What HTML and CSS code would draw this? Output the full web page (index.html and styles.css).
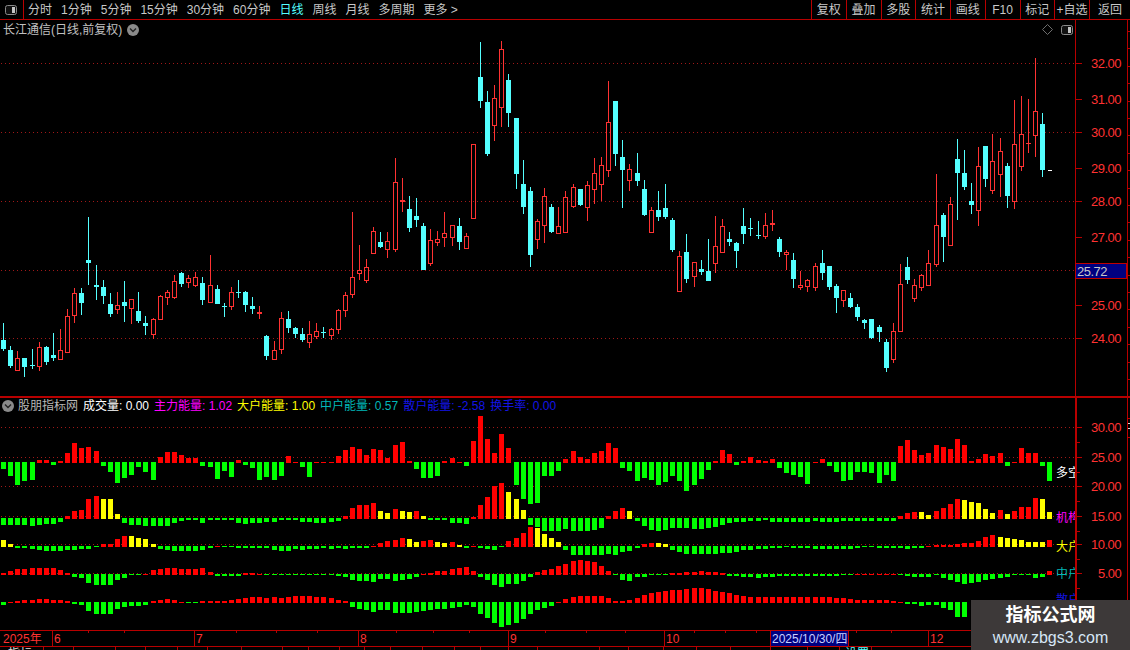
FILE: index.html
```html
<!DOCTYPE html>
<html lang="zh-CN">
<head>
<meta charset="utf-8">
<title>长江通信 日线</title>
<link rel="stylesheet" href="styles.css">
</head>
<body>
<div class="app">
  <header class="toolbar">
    <div class="layout-btn">
      <svg class="icon-layout" viewBox="0 0 12 10"><rect x="0.5" y="0.5" width="11" height="9" rx="2" fill="#111" stroke="#8a8a8a"/><rect x="7" y="2" width="3" height="6" fill="#c4c4c4"/></svg>
    </div>
    <nav class="periods">
      <span>分时</span><span>1分钟</span><span>5分钟</span><span>15分钟</span><span>30分钟</span><span>60分钟</span><span class="active">日线</span><span>周线</span><span>月线</span><span>多周期</span><span>更多 &gt;</span>
    </nav>
    <nav class="actions">
      <span>复权</span><span>叠加</span><span>多股</span><span>统计</span><span>画线</span><span>F10</span><span>标记</span><span>+自选</span><span class="back">返回</span>
    </nav>
  </header>

  <section class="panel panel-price">
    <svg class="plot" id="price-plot" viewBox="0 20 1075 376"></svg>
    <svg class="axis" id="price-axis" viewBox="1075 20 55 376"></svg>
    <div class="title">
      <span>长江通信(日线,前复权)</span>
      <svg class="icon-chevron" viewBox="0 0 12 12"><circle cx="6" cy="6" r="6" fill="#8a8a8a"/><path d="M3 4.6 6 7.6 9 4.6" fill="none" stroke="#222" stroke-width="1.4"/></svg>
    </div>
    <div class="corner">
      <svg class="icon-diamond" viewBox="0 0 11 11"><path d="M5.5 0.5 10.5 5.5 5.5 10.5 0.5 5.5Z" fill="none" stroke="#6e6e6e"/></svg>
      <svg class="icon-layout" viewBox="0 0 12 10"><rect x="0.5" y="0.5" width="11" height="9" rx="2" fill="#111" stroke="#8a8a8a"/><rect x="7" y="2" width="3" height="6" fill="#c4c4c4"/></svg>
    </div>
  </section>

  <section class="panel panel-indicator">
    <svg class="plot" id="ind-plot" viewBox="0 398 1075 232"></svg>
    <svg class="axis" id="ind-axis" viewBox="1075 398 55 232"></svg>
    <div class="legend">
      <svg class="icon-chevron" viewBox="0 0 12 12"><circle cx="6" cy="6" r="6" fill="#8a8a8a"/><path d="M3 4.6 6 7.6 9 4.6" fill="none" stroke="#222" stroke-width="1.4"/></svg>
      <span class="name">股朋指标网</span>
      <span class="c-white">成交量: 0.00</span>
      <span class="c-magenta">主力能量: 1.02</span>
      <span class="c-yellow">大户能量: 1.00</span>
      <span class="c-teal">中户能量: 0.57</span>
      <span class="c-blue">散户能量: -2.58</span>
      <span class="c-blue">换手率: 0.00</span>
    </div>
  </section>

  <svg class="xaxis" id="xaxis" viewBox="0 630 1130 20"></svg>

  <aside class="watermark">
    <strong>指标公式网</strong>
    <span>www.zbgs3.com</span>
  </aside>
</div>
<script src="script.js"></script>
</body>
</html>
```

FILE: styles.css
```css
* { box-sizing: border-box; }
html, body { margin: 0; padding: 0; background: #000; }
body { font: 12px/1 "Liberation Sans", "Noto Sans CJK SC", sans-serif; color: #c8c8c8; overflow: hidden; }

.app { position: relative; width: 1130px; height: 650px; display: flex; flex-direction: column; overflow: hidden; background: #000; }

.toolbar { display: flex; align-items: center; height: 20px; flex: none; border-bottom: 1px solid #b80000; }
.layout-btn { width: 24px; height: 19px; display: flex; align-items: center; justify-content: center; border-right: 1px solid #b80000; padding-right: 1px; }
.icon-layout { width: 12px; height: 10px; display: block; }
.periods { display: flex; gap: 9px; margin-left: 4px; }
.periods .active { color: #54ffff; }
.actions { display: flex; margin-left: auto; height: 19px; }
.actions span { width: 34.75px; display: flex; align-items: center; justify-content: center; border-left: 1px solid #b80000; }
.actions .back { width: 41px; }

.panel { position: relative; display: flex; flex: none; }
.panel-price { height: 376px; border-bottom: 0; }
.panel-indicator { height: 234px; border-top: 2px solid #b80000; }
.plot { display: block; width: 1075px; height: 100%; flex: none; }
.axis { display: block; width: 55px; height: 100%; flex: none; }

.title { position: absolute; left: 3px; top: 3px; display: flex; align-items: center; gap: 5px; height: 14px; color: #c0c0c0; }
.icon-chevron { width: 12px; height: 12px; display: block; flex: none; }
.corner { position: absolute; left: 1042px; top: 4px; display: flex; align-items: center; gap: 8px; }
.icon-diamond { width: 11px; height: 11px; display: block; }

.legend { position: absolute; left: 2px; top: 1px; display: flex; align-items: center; gap: 5px; height: 13px; white-space: nowrap; }
.legend .name { color: #b8b8b8; margin-left: -1px; }
.c-white { color: #fff; }
.c-magenta { color: #ff00ff; }
.c-yellow { color: #ffff00; }
.c-teal { color: #00b8b8; }
.c-blue { color: #1414e6; }

.xaxis { display: block; width: 1130px; height: 20px; flex: none; }

.watermark { position: absolute; left: 971px; top: 600px; width: 159px; height: 50px; background: #3d3939; display: flex; flex-direction: column; align-items: center; padding-top: 6px; gap: 6px; }
.watermark strong { font-size: 18px; line-height: 18px; color: #fff; font-weight: 700; }
.watermark span { font-size: 16px; line-height: 16px; color: #d6e6f6; }

svg text { font-family: "Liberation Sans", "Noto Sans CJK SC", sans-serif; }
.price-label { font-size: 13px; letter-spacing: -0.5px; fill: #ff3232; }
.last-label { font-size: 13px; letter-spacing: -0.5px; fill: #c8c8c8; }
.side-label { font-size: 12px; }
.x-label { font-size: 12px; fill: #ff3232; }
.x-date { font-size: 12px; fill: #c8d0ff; }
.tab-label { font-size: 12px; }
```

FILE: script.js
```js
var NS = 'http://www.w3.org/2000/svg';
var RED = '#ff3232', CYAN = '#54ffff', LINE = '#b80000', DOT = '#a01818';

function el(parent, name, attrs, text) {
  var n = document.createElementNS(NS, name);
  for (var k in attrs) n.setAttribute(k, attrs[k]);
  if (text !== undefined) n.textContent = text;
  parent.appendChild(n);
  return n;
}
function rect(p, x, y, w, h, fill) { return el(p, 'rect', { x: x, y: y, width: w, height: h, fill: fill, 'shape-rendering': 'crispEdges' }); }
function dotted(p, y, x2) {
  el(p, 'line', { x1: 1, x2: x2, y1: y + 0.5, y2: y + 0.5, stroke: DOT, 'stroke-width': 1, 'stroke-dasharray': '1 3', 'shape-rendering': 'crispEdges' });
}
function px(i) { return Math.floor(3.58 + 7.118 * i); }

/* colour, high, body top, body bottom, low — one entry per trading day */
var candles = [
'c 323 340 349 351','c 346 350 366 368','r 351 358 371 371','c 358 358 367 377','c 349 365 366 369',
'r 342 347 367 371','c 346 347 362 365','c 333 355 358 361','r 329 350 360 360','r 309 316 353 353',
'r 288 293 316 323','c 288 293 303 315','c 217 260 263 285','c 265 285 287 300','c 280 287 296 304',
'c 293 304 314 317','r 292 305 310 314','c 281 302 306 322','r 299 299 309 324','c 292 311 321 323',
'c 316 323 326 335','r 318 319 335 339','r 295 296 320 320','r 290 292 298 305','r 275 281 298 299',
'c 272 273 284 287','r 275 278 283 288','r 272 277 286 287','c 277 283 300 305','r 255 285 303 303',
'c 285 289 304 304','c 303 306 307 317','r 287 292 307 310','c 280 292 293 298','c 291 292 305 312',
'c 297 306 309 314','r 306 312 314 319','c 335 336 356 360','r 341 350 360 360','r 312 318 350 354',
'c 311 319 328 333','c 327 328 334 338','c 328 334 340 342','r 321 334 343 348','r 323 331 337 339',
'c 327 332 333 338','r 328 329 336 340','r 309 310 330 334','r 292 295 311 317','r 212 277 295 298',
'r 245 270 274 280','r 259 267 281 283','r 227 231 254 254','c 232 242 247 248','r 232 241 250 258',
'r 158 182 250 252','r 178 200 202 212','c 196 209 228 232','c 198 216 220 227','c 223 226 270 270',
'r 229 240 264 266','r 231 239 243 246','r 212 233 238 247','r 225 225 238 246','c 218 226 242 250',
'r 233 236 249 249','r 144 144 219 219','c 42 77 101 108','c 91 102 154 156','r 85 98 126 141',
'r 41 49 108 127','c 74 80 113 127','c 118 118 174 189','c 160 184 207 214','c 187 191 255 267',
'r 219 221 240 249','r 188 196 226 243','c 204 207 232 233','r 207 226 234 234','r 191 197 233 233',
'r 184 187 207 208','c 189 189 205 206','r 181 185 208 221','r 158 173 190 204','r 157 165 185 201',
'r 81 122 171 177','c 101 101 154 166','c 140 157 170 208','r 164 169 181 191','c 153 173 181 186',
'c 180 189 215 216','r 207 210 233 233','c 191 210 217 221','c 184 208 217 219','c 218 220 250 252',
'r 251 256 292 292','c 234 252 279 283','r 262 262 277 287','c 260 269 272 275','c 239 271 281 281',
'r 216 246 264 273','r 219 226 253 253','c 232 239 242 246','c 242 243 251 268','c 208 226 234 244',
'c 218 228 229 236','c 221 235 236 239','r 213 225 237 239','r 210 223 225 231','c 237 239 252 257',
'r 250 252 255 270','c 253 260 279 288','r 271 285 288 290','r 279 280 287 292','r 263 266 288 291',
'c 250 263 273 280','c 266 266 287 290','c 284 286 298 313','r 290 290 301 307','c 293 298 307 308',
'c 304 307 317 321','c 319 320 323 329','c 319 319 338 339','c 325 327 332 342','c 339 342 368 372',
'r 323 331 360 363','r 264 284 332 332','c 257 267 280 284','r 279 285 299 302','r 274 275 288 291',
'r 250 263 286 286','r 174 225 265 267','c 213 215 237 262','r 197 204 246 246','c 139 159 173 220',
'c 150 173 187 190','c 183 201 205 214','r 147 166 211 226','c 146 146 179 187','r 134 161 191 194',
'r 138 151 175 197','c 163 166 196 208','r 100 144 202 209','r 96 134 167 171','r 99 143 144 153',
'r 58 111 136 157','c 113 124 170 177'
];

/* signed heights: + red, - green, yN yellow */
var rows = [
{ base: 462, data: '-7 -14 -23 -19 -18 3 3 -3 2 10 20 15 16 12 -4 -10 -21 -16 -13 -5 -10 -18 6 11 11 8 5 5 -4 -5 -17 -9 -15 3 -3 -6 -18 -15 -18 -14 7 1 -5 -15 1 1 1 7 13 16 14 8 14 13 5 18 21 2 -7 -16 -16 -14 2 5 1 -4 22 47 24 10 29 15 -23 -37 -42 -41 -14 -14 -9 4 12 6 4 10 12 20 15 -6 -9 -19 -16 -18 -23 -20 -14 -19 -29 -23 -17 -8 2 13 9 -3 2 6 3 2 4 -6 -11 -13 -15 -22 1 4 -4 -10 -19 -18 -10 -10 -11 -21 -13 -19 17 23 13 8 10 18 16 14 24 18 2 4 9 7 10 -4 1 15 10 10 -4 -19' },
{ base: 518, data: '-7 -7 -7 -7 -8 -7 -6 -6 -4 3 8 9 20 23 y20 y20 y5 -5 -7 -7 -8 -8 -8 -8 -5 -3 -2 -2 -5 -2 -2 -2 -2 -5 -6 -5 -5 -4 -4 -2 -2 -2 -4 -4 -5 -5 -4 -3 3 11 14 14 16 y8 y6 10 y8 y7 8 y3 -2 -2 -2 -5 -5 -6 2 14 22 33 36 y27 y20 y9 -7 -9 -13 -13 -13 -11 -13 -13 -13 -12 -10 3 8 11 y8 -3 -8 -12 -13 -12 -10 -10 -10 -11 -11 -10 -9 -7 -5 -4 -4 -3 -3 -2 -4 -4 -4 -4 -4 -4 -3 -4 -4 -4 -3 -3 -3 -3 -3 -3 -3 -3 3 6 7 y7 y4 8 11 15 20 y19 y17 y16 y10 y6 9 y5 8 12 12 21 y20 y7' },
{ base: 546, data: 'y7 y3 -2 -2 -3 -4 -5 -5 -5 -4 -4 -3 -3 -1 3 3 8 11 y11 y9 y8 y3 -3 -4 -5 -5 -5 -5 -4 -2 1 -1 -1 -2 -2 -2 -2 -2 -4 -5 -5 -3 -4 -3 -3 -2 -3 -2 -3 -2 -2 -2 1 4 6 7 9 y8 y5 6 7 y5 y4 5 y2 -2 1 -2 -3 -4 -1 6 9 14 20 y19 y13 y9 y5 -4 -9 -9 -9 -9 -9 -8 -9 -6 -5 -2 3 4 y4 y3 -4 -6 -8 -8 -8 -8 -8 -7 -7 -6 -4 -4 -3 -3 -2 -2 -1 -2 -2 -2 -3 -3 -3 -3 -3 -3 -2 -1 -1 -2 -2 -2 -2 -3 -2 -2 1 2 2 2 3 4 4 6 10 12 y10 y9 y8 y7 y5 y5 y5 7' },
{ base: 574, data: '2 4 6 6 7 7 7 7 5 2 -3 -4 -9 -11 -11 -11 -6 -4 -1 -1 1 5 6 7 7 6 6 6 7 3 -2 -2 -2 -2 2 2 1 -1 -1 -1 -1 -1 -1 -1 -1 -1 -1 -2 -3 -6 -7 -7 -8 -5 -5 -7 -6 -5 -3 1 2 4 4 6 7 8 4 -3 -6 -11 -13 -10 -10 -7 -3 3 5 6 9 11 14 15 14 13 9 4 -1 -6 -7 -3 -3 -1 -1 -1 2 2 3 3 4 3 3 2 -2 -2 -3 -3 -4 -3 -3 -2 -2 -2 -2 -2 -2 -2 -2 -2 -1 -1 1 1 1 1 1 1 -1 -2 -3 -3 -3 -1 -4 -6 -8 -10 -9 -8 -6 -5 -4 -3 -1 -1 -1 -4 -3 4' },
{ base: 602, data: '-3 1 2 3 3 4 4 3 3 2 -2 -3 -9 -12 -12 -12 -7 -5 -4 -4 -3 2 3 4 3 1 -1 -1 2 2 2 2 3 4 5 6 6 5 6 5 6 7 7 7 6 6 5 3 2 -5 -7 -8 -10 -8 -8 -11 -11 -11 -10 -9 -8 -7 -7 -6 -5 -3 -5 -12 -16 -21 -25 -23 -21 -17 -12 -8 -6 -4 1 4 6 7 7 7 7 5 2 2 3 5 8 10 11 12 13 13 14 15 15 14 12 11 10 8 7 6 6 6 6 6 6 6 6 6 6 6 6 5 5 4 3 3 3 3 3 2 1 -2 -2 -4 -3 -3 -6 -8 -15 -15' }
];

function drawPrice() {
  var plot = document.getElementById('price-plot');
  [63, 132, 201, 270, 338].forEach(function (y) { dotted(plot, y, 1075); });
  candles.forEach(function (s, i) {
    var p = s.split(' '), c = px(i), h = +p[1], t = +p[2], b = +p[3], l = +p[4];
    var col = p[0] === 'c' ? CYAN : RED;
    if (h < t) rect(plot, c, h, 1, t - h, col);
    if (l > b) rect(plot, c, b, 1, l - b, col);
    if (p[0] === 'c' || b - t <= 2) {
      rect(plot, c - 2, t, 5, Math.max(b - t, 1), col);
    } else {
      rect(plot, c - 2, t, 5, 1, col);
      rect(plot, c - 2, b - 1, 5, 1, col);
      rect(plot, c - 2, t, 1, b - t, col);
      rect(plot, c + 2, t, 1, b - t, col);
    }
  });
  rect(plot, 1048, 170, 4, 1, '#fff');

  var ax = document.getElementById('price-axis');
  rect(ax, 1075, 20, 1, 376, LINE);
  rect(ax, 1127, 20, 1, 376, LINE);
  var labels = { '32.00': 63, '31.00': 99, '30.00': 132, '29.00': 168, '28.00': 201, '27.00': 237, '25.00': 305, '24.00': 338 };
  Object.keys(labels).forEach(function (t) {
    var y = labels[t];
    rect(ax, 1076, y, 6, 1, LINE);
    el(ax, 'text', { x: 1091, y: y + 5, 'class': 'price-label' }, t);
  });
  rect(ax, 1076, 270, 6, 1, LINE);
  for (var y = 31; y < 396; y += 17.4) rect(ax, 1128, Math.round(y), 2, 1, LINE);
  el(ax, 'rect', { x: 1075.5, y: 263.5, width: 51, height: 15, fill: '#000080', stroke: '#c00000', 'shape-rendering': 'crispEdges' });
  el(ax, 'text', { x: 1077, y: 276, 'class': 'last-label' }, '25.72');
}

function drawIndicator() {
  var plot = document.getElementById('ind-plot');
  [427, 457, 486, 516, 544, 573].forEach(function (y) { dotted(plot, y, 1075); });
  rows.forEach(function (row) {
    row.data.split(' ').forEach(function (v, i) {
      var x = px(i) - 2, yellow = v.charAt(0) === 'y', n = yellow ? +v.slice(1) : +v;
      if (n < 0) rect(plot, x, row.base, 5, -n, '#00ff00');
      else rect(plot, x, row.base + 1 - n, 5, n, yellow ? '#ffff00' : '#ff0000');
    });
  });
  [['多空', 477, '#ffffff'], ['机构', 522, '#ff00ff'], ['大户', 551, '#ffff00'], ['中户', 578, '#00b8b8'], ['散户', 604, '#1414e6']].forEach(function (l) {
    el(plot, 'text', { x: 1056, y: l[1], fill: l[2], 'class': 'side-label' }, l[0]);
  });

  var ax = document.getElementById('ind-axis');
  rect(ax, 1075, 398, 2, 232, LINE);
  rect(ax, 1127, 398, 1, 232, LINE);
  var labels = { '30.00': 427, '25.00': 457, '20.00': 486, '15.00': 516, '10.00': 544, '5.00': 573 };
  Object.keys(labels).forEach(function (t) {
    var y = labels[t];
    rect(ax, 1077, y, 5, 1, LINE);
    rect(ax, 1077, y + 15, 3, 1, LINE);
    el(ax, 'text', { x: t.length > 4 ? 1091 : 1098, y: y + 5, 'class': 'price-label' }, t);
  });
  el(ax, 'rect', { x: 1127.5, y: 418.5, width: 4, height: 19, fill: 'none', stroke: '#c00000', 'shape-rendering': 'crispEdges' });
  rect(ax, 1128, 423, 2, 1, '#ddd');
  rect(ax, 1128, 428, 2, 1, '#ddd');
}

function drawXAxis() {
  var s = document.getElementById('xaxis');
  rect(s, 0, 630, 1130, 1, LINE);
  rect(s, 0, 646, 1130, 1, LINE);
  el(s, 'text', { x: 3, y: 643, 'class': 'x-label' }, '2025年');
  [[52, '6'], [194, '7'], [358, '8'], [508, '9'], [664, '10'], [928, '12']].forEach(function (m) {
    rect(s, m[0], 631, 1, 15, LINE);
    el(s, 'text', { x: m[0] + 2, y: 643, 'class': 'x-label' }, m[1]);
  });
  [88, 124, 236, 276, 317, 396, 433, 469, 545, 586, 625, 694, 725, 756, 856, 891].forEach(function (x) { rect(s, x, 631, 1, 2, LINE); });
  el(s, 'rect', { x: 770.5, y: 630.5, width: 78, height: 16, fill: '#000080', stroke: '#c00000', 'shape-rendering': 'crispEdges' });
  el(s, 'text', { x: 772, y: 643, 'class': 'x-date' }, '2025/10/30/四');
  [43, 73, 115, 145, 177, 207, 241, 282, 308, 339, 364, 390, 422, 454, 480, 508, 537, 599, 628, 663, 696, 730, 770, 807, 839, 871].forEach(function (x) { rect(s, x, 647, 1, 3, LINE); });
  el(s, 'text', { x: 8, y: 658, fill: '#dddddd', 'class': 'tab-label' }, '指标');
  el(s, 'text', { x: 845, y: 658, fill: '#54ffff', 'class': 'tab-label' }, '设置');
}

drawPrice();
drawIndicator();
drawXAxis();
```
